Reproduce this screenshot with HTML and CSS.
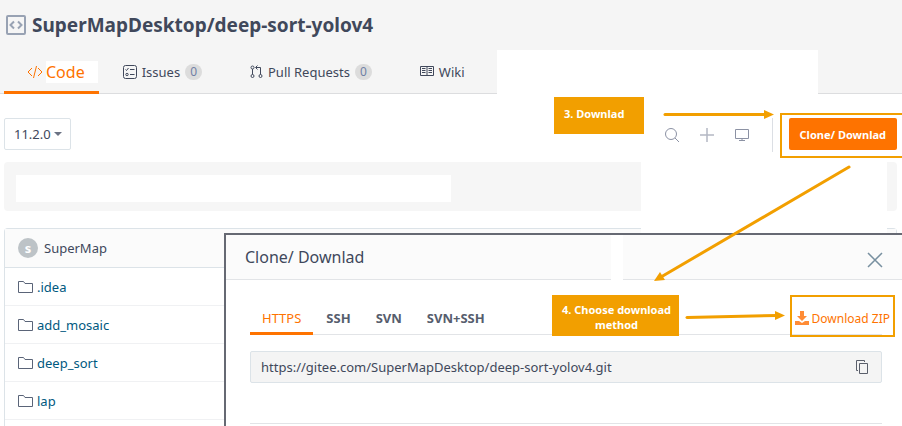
FILE: index.html
```
<!DOCTYPE html>
<html lang="en">
    <head>
        <meta charset="utf-8">
        <title>SuperMapDesktop/deep-sort-yolov4</title>
        <link rel="stylesheet" href="styles.css">
    </head>
    <body>
        <div class="page">
            <header class="header">
                <h1 class="title">
                    <svg class="repo-icon" width="20" height="20" viewBox="0 0 20 20" fill="none" stroke="#98a2b3" stroke-width="2">
                        <rect x="1" y="1" width="18" height="18" rx="1"/>
                        <path d="M8 6.5L4.5 10L8 13.5M12 6.5L15.5 10L12 13.5"/>
                    </svg>
                    SuperMapDesktop/deep-sort-yolov4
                </h1>
                <nav class="tabs">
                    <a class="tab active" href="#code">
                        <svg width="16" height="14" viewBox="0 0 16 14" fill="none" stroke="#fe7300">
                            <path d="M5 3L1 7L5 11M11 3L15 7L11 11M9.5 1L6.5 13"/>
                        </svg>
                        <span class="tab-name">Code</span>
                    </a>
                    <a class="tab" href="#issues">
                        <svg width="14" height="14" viewBox="0 0 14 14" fill="none" stroke="#40485b">
                            <rect x=".5" y=".5" width="13" height="13" rx="2"/>
                            <path d="M2.5 4.5L3.5 5.5L5.5 3M7 4.5H11.5M7 9.5H11.5"/>
                            <circle cx="4" cy="9.5" r="1.2"/>
                        </svg>
                        Issues
                        <span class="count">0</span>
                    </a>
                    <a class="tab" href="#pulls">
                        <svg width="13" height="14" viewBox="0 0 13 14" fill="none" stroke="#40485b">
                            <circle cx="2.5" cy="2.5" r="1.5"/>
                            <circle cx="2.5" cy="11" r="1.5"/>
                            <circle cx="10.5" cy="11" r="1.5"/>
                            <path d="M2.5 4V9.5M10.5 9.5V2.5H6M7.5 .5L5.5 2.5L7.5 4.5"/>
                        </svg>
                        Pull Requests
                        <span class="count">0</span>
                    </a>
                    <a class="tab" href="#wiki">
                        <svg width="14" height="14" viewBox="0 0 14 14" fill="none" stroke="#40485b">
                            <path d="M.5 1.5H13.5V10.5H.5ZM7 1.5V11M2 3.5H5.5M2 5.5H5.5M2 7.5H5.5M8.5 3.5H12M8.5 5.5H12M8.5 7.5H12"/>
                        </svg>
                        Wiki
                    </a>
                </nav>
            </header>

            <main class="content">
                <div class="toolbar">
                    <div class="branch">
                        <select class="branch-select" aria-label="Branch">
                            <option>11.2.0</option>
                        </select>
                    </div>
                    <div class="tools">
                        <button class="tool" aria-label="Search">
                            <svg width="16" height="16" viewBox="0 0 16 16" fill="none" stroke="#8c92a4">
                                <circle cx="7" cy="7" r="5.5"/>
                                <path d="M11 11L15 15"/>
                            </svg>
                        </button>
                        <button class="tool" aria-label="Add">
                            <svg width="16" height="16" viewBox="0 0 16 16" fill="none" stroke="#b4b8c4">
                                <path d="M8 1V15M1 8H15" stroke-width="1.5"/>
                            </svg>
                        </button>
                        <button class="tool" aria-label="Web IDE">
                            <svg width="16" height="16" viewBox="0 0 16 16" fill="none" stroke="#8c92a4">
                                <path d="M1.5 2.5H14.5V11.5H1.5ZM8 11.5V13.5M5 13.5H11"/>
                            </svg>
                        </button>
                    </div>
                    <div class="clone">
                        <button class="clone-button">Clone/ Downlad</button>
                        <div class="clone-mark"></div>
                    </div>
                </div>

                <div class="notice">
                    <div class="notice-text"></div>
                </div>

                <div class="files">
                    <div class="files-head">
                        <span class="avatar">s</span>
                        SuperMap
                    </div>
                    <a class="file" href="#idea">
                        <svg class="folder" width="15" height="12"><use href="#folder"/></svg>
                        .idea
                    </a>
                    <a class="file" href="#add_mosaic">
                        <svg class="folder" width="15" height="12"><use href="#folder"/></svg>
                        add_mosaic
                    </a>
                    <a class="file" href="#deep_sort">
                        <svg class="folder" width="15" height="12"><use href="#folder"/></svg>
                        deep_sort
                    </a>
                    <a class="file" href="#lap">
                        <svg class="folder" width="15" height="12"><use href="#folder"/></svg>
                        lap
                    </a>
                </div>
            </main>

            <div class="blank blank-tabs"></div>
            <div class="blank blank-notice"></div>

            <section class="modal">
                <div class="modal-head">
                    <h2 class="modal-title">Clone/ Downlad</h2>
                    <button class="close" aria-label="Close">
                        <svg width="16" height="16" viewBox="0 0 16 16" fill="none" stroke="#7890a0" stroke-width="1.5">
                            <path d="M1 1L15 15M15 1L1 15"/>
                        </svg>
                    </button>
                    <div class="head-gap"></div>
                </div>
                <div class="modal-body">
                    <div class="protocols">
                        <a class="protocol selected" href="#https">HTTPS</a>
                        <a class="protocol" href="#ssh">SSH</a>
                        <a class="protocol" href="#svn">SVN</a>
                        <a class="protocol" href="#svn-ssh">SVN+SSH</a>
                        <a class="zip" href="#zip">
                            <svg width="14" height="14" viewBox="0 0 14 14" fill="#ff8c36">
                                <path d="M5 0H9V5H12L7 10L2 5H5Z"/>
                                <path d="M0 10H4L7 12L10 10H14V14H0Z"/>
                            </svg>
                            Download ZIP
                        </a>
                    </div>
                    <div class="address">
                        <input class="address-input" type="text" aria-label="Clone address" value="https://gitee.com/SuperMapDesktop/deep-sort-yolov4.git" readonly>
                        <button class="copy" aria-label="Copy">
                            <svg width="14" height="14" viewBox="0 0 14 14" fill="none" stroke="#5a5f6b">
                                <path d="M4.5 3.5H12.5V13.5H4.5ZM3 10.5H1.5V.5H9.5V2"/>
                            </svg>
                        </button>
                    </div>
                    <hr class="line">
                </div>
            </section>

            <!-- callouts and arrows over the page -->
            <div class="callout step-three">3. Downlad</div>
            <div class="callout step-four">4. Choose download method</div>
            <svg class="arrows" width="902" height="426" viewBox="0 0 902 426" fill="#f29f00" stroke="#f29f00">
                <path d="M665 114.500H766" stroke-width="3" stroke-linecap="round"/>
                <path d="M764 110L774 114.500L764 119Z" stroke="none"/>
                <path d="M849 167L661 277" stroke-width="3" stroke-linecap="round"/>
                <path d="M654 281L660 272L665 280Z" stroke="none"/>
                <path d="M687 317.500L777 315.500" stroke-width="3" stroke-linecap="round"/>
                <path d="M775 311L785 315.500L775 320Z" stroke="none"/>
            </svg>
        </div>

        <svg class="symbols" width="0" height="0">
            <symbol id="folder" viewBox="0 0 15 12">
                <path d="M.5 .5H5.500L7 2.500H14.500V11.500H.5Z" fill="none" stroke="#5a6478"/>
            </symbol>
        </svg>
    </body>
</html>
```

FILE: styles.css
```
* {
    box-sizing: border-box;
    font-family: "Noto Sans", "Open Sans", sans-serif;
}
body {
    margin: 0;
    background-color: #fff;
    color: #40485b;
    font-size: 14px;
}
a {
    color: inherit;
    text-decoration: none;
}
button {
    border: none;
    padding: 0;
    background: none;
    cursor: pointer;
}
svg {
    display: block;
    flex-shrink: 0;
}
.page {
    position: relative;
    min-height: 100vh;
    overflow: hidden;
}
.symbols {
    position: absolute;
}

/* header */
.header {
    background-color: #f5f5f5;
    border-bottom: 1px solid #dcdddf;
}
.title {
    display: flex;
    align-items: center;
    gap: 6px;
    margin: 0;
    padding: 0 6px;
    height: 50px;
    font-size: 19px;
    font-weight: bold;
}
.tabs {
    display: flex;
    align-items: stretch;
    padding-left: 4px;
    height: 43px;
}
.tab {
    display: flex;
    align-items: center;
    gap: 5px;
    padding: 0 24px;
    font-size: 13px;
}
.tab.active {
    gap: 3px;
    padding: 2px 1px 0 23px;
    margin-bottom: -1px;
    border-bottom: 3px solid #fe7300;
    color: #fe7300;
    font-size: 16px;
}
.tab-name {
    padding-right: 13px;
    background-color: #fff;
    line-height: 22px;
}
.count {
    padding: 0 5px;
    border-radius: 8px;
    background-color: #dcdcdc;
    color: #7080a5;
    font-size: 12px;
    line-height: 16px;
}

/* toolbar */
.content {
    padding: 24px 5px 0 4px;
}
.toolbar {
    display: flex;
    justify-content: space-between;
    height: 34px;
}
.branch {
    position: relative;
    height: 32px;
}
.branch::after {
    content: "";
    position: absolute;
    right: 9px;
    top: 14px;
    border: 4px solid transparent;
    border-top-color: #6b7283;
    pointer-events: none;
}
.branch-select {
    appearance: none;
    height: 32px;
    padding: 0 19px 0 9px;
    border: 1px solid #dce3e8;
    border-radius: 2px;
    background-color: #fff;
    color: #40485b;
    font-size: 13px;
}
.tools {
    display: flex;
    align-items: center;
    gap: 19px;
    margin-left: auto;
    padding-right: 22px;
    border-right: 1px solid #dcdfe4;
}
.clone {
    position: relative;
    margin-left: 16px;
}
.clone-button {
    height: 32px;
    padding: 0 11px;
    border-radius: 2px;
    background-color: #fe7300;
    color: #fff;
    font-size: 11px;
    font-weight: bold;
}
.clone-mark {
    position: absolute;
    top: -5px;
    bottom: -6px;
    left: -9px;
    right: -8px;
    border: 2px solid #f29f00;
}

/* notice and file list */
.notice {
    margin-top: 10px;
    padding: 13px 12px 9px;
    border-radius: 4px;
    background-color: #f6f6f6;
}
.notice-text {
    width: 50%;
    height: 27px;
    background-color: #fff;
}
.files {
    margin-top: 17px;
    padding-bottom: 6px;
    border: 1px solid #dce3e8;
    border-bottom: none;
    border-radius: 4px 4px 0 0;
}
.files-head {
    display: flex;
    align-items: center;
    gap: 6px;
    height: 39px;
    padding: 0 13px;
    border-bottom: 1px solid #dce3e8;
    background-color: #fbfbfb;
    font-size: 13px;
}
.avatar {
    width: 20px;
    height: 20px;
    border-radius: 50%;
    background-color: #bdc3c7;
    color: #fff;
    font-weight: bold;
    line-height: 20px;
    text-align: center;
}
.file {
    display: flex;
    align-items: center;
    gap: 4px;
    height: 38px;
    padding: 0 13px;
    border-bottom: 1px solid #f0f1f3;
    color: #005980;
    font-size: 13px;
}

/* white areas over the page */
.blank {
    position: absolute;
    background-color: #fff;
}
.blank-tabs {
    top: 50px;
    left: 497px;
    width: 321px;
    height: 46px;
}
.blank-notice {
    top: 160px;
    left: 641px;
    width: 246px;
    height: 74px;
}

/* clone dialog */
.modal {
    position: absolute;
    top: 233px;
    left: 224px;
    right: 0;
    border: 2px solid #666973;
    border-right: none;
    border-bottom: none;
    background-color: #fff;
}
.modal-head {
    display: flex;
    position: relative;
    align-items: center;
    justify-content: space-between;
    height: 45px;
    padding: 0 19px;
    border-bottom: 1px solid #e2e4e7;
    background-color: #fbfbfb;
}
.head-gap {
    position: absolute;
    top: 0;
    bottom: -1px;
    left: 385px;
    width: 12px;
    background-color: #fff;
}
.modal-title {
    margin: 0;
    font-size: 16px;
    font-weight: normal;
}
.close {
    padding-top: 5px;
}
.modal-body {
    padding: 22px 20px 2px 24px;
}
.protocols {
    display: flex;
    gap: 1px;
    height: 33px;
    border-bottom: 1px solid #e2e4e7;
}
.protocol {
    height: 33px;
    padding: 0 12px;
    line-height: 32px;
    font-size: 13px;
    font-weight: bold;
    color: #565d6d;
}
.protocol.selected {
    border-bottom: 3px solid #fe7300;
    color: #fe7300;
    font-weight: normal;
}
.zip {
    display: flex;
    align-items: center;
    gap: 3px;
    height: 42px;
    margin: -7px -13px 0 auto;
    padding: 4px 3px 0;
    border: 2px solid #f29f00;
    color: #fe7300;
    font-size: 12px;
}
.address {
    display: flex;
    margin-top: 16px;
    height: 32px;
    border: 1px solid #dce3e8;
    border-radius: 2px;
    background-color: #f4f4f4;
}
.address-input {
    flex: 1;
    min-width: 0;
    padding: 0 10px;
    border: none;
    background: none;
    color: #40485b;
    font-size: 13px;
}
.copy {
    padding: 0 12px;
}
.line {
    margin: 40px 0 0;
    border: none;
    border-top: 1px solid #e2e4e7;
}

/* callouts */
.callout {
    position: absolute;
    background-color: #f29f00;
    color: #fff;
    font-size: 11px;
    font-weight: bold;
    line-height: 15px;
}
.step-three {
    top: 97px;
    left: 554px;
    width: 90px;
    height: 37px;
    padding: 9px 10px;
}
.step-four {
    top: 295px;
    left: 552px;
    width: 127px;
    height: 41px;
    padding: 7px 4px 0 6px;
    text-align: center;
}
.arrows {
    position: absolute;
    top: 0;
    left: 0;
    pointer-events: none;
}
```
